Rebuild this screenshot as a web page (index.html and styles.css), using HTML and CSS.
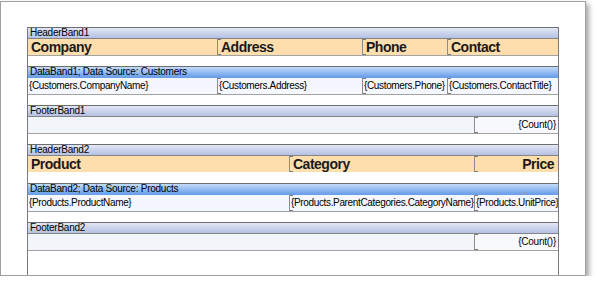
FILE: index.html
```html
<!DOCTYPE html>
<html>
<head>
<meta charset="utf-8">
<link rel="stylesheet" href="styles.css">
</head>
<body>
<div class="page">
  <div class="report">

    <div class="band">
      <div class="band-title">HeaderBand1</div>
      <div class="band-body header header1 cols-h1">
        <div class="cell">Company</div>
        <div class="cell sep">Address</div>
        <div class="cell sep">Phone</div>
        <div class="cell sep">Contact</div>
      </div>
    </div>

    <div class="band">
      <div class="band-title data-title">DataBand1; Data Source: Customers</div>
      <div class="band-body data cols-h1">
        <div class="cell">{Customers.CompanyName}</div>
        <div class="cell sep">{Customers.Address}</div>
        <div class="cell sep">{Customers.Phone}</div>
        <div class="cell sep">{Customers.ContactTitle}</div>
      </div>
    </div>

    <div class="band">
      <div class="band-title">FooterBand1</div>
      <div class="band-body footer cols-f">
        <div class="cell"></div>
        <div class="cell sep count">{Count()}</div>
      </div>
    </div>

    <div class="band">
      <div class="band-title">HeaderBand2</div>
      <div class="band-body header header2 cols-h2">
        <div class="cell">Product</div>
        <div class="cell sep">Category</div>
        <div class="cell sep right">Price</div>
      </div>
    </div>

    <div class="band">
      <div class="band-title data-title">DataBand2; Data Source: Products</div>
      <div class="band-body data cols-h2">
        <div class="cell">{Products.ProductName}</div>
        <div class="cell sep">{Products.ParentCategories.CategoryName}</div>
        <div class="cell sep">{Products.UnitPrice}</div>
      </div>
    </div>

    <div class="band">
      <div class="band-title">FooterBand2</div>
      <div class="band-body footer cols-f">
        <div class="cell"></div>
        <div class="cell sep count">{Count()}</div>
      </div>
    </div>

  </div>
</div>
</body>
</html>
```

FILE: styles.css
```css
body {
	margin: 0;
	background: #ffffff;
	font-family: "Liberation Sans", Arial, sans-serif;
	font-size: 10px;
	letter-spacing: -0.25px;
	color: #000000;
}

.page {
	margin-top: 1px;
	width: 584px;
	height: 273px;
	border: 1px solid #a0a0a0;
	background: #ffffff;
	box-shadow: 3px 3px 5px rgba(0, 0, 0, 0.35);
	display: flex;
	flex-direction: column;
}

.report {
	margin: 25px 0 0 26px;
	width: 530px;
	flex: 1;
	border-left: 1px solid #7a7a7a;
	border-right: 1px solid #7a7a7a;
}

.band {
	margin-bottom: 10px;
}

/* band captions */
.band-title {
	height: 10px;
	line-height: 10px;
	padding-left: 2px;
	border-top: 1px solid #6e6e6e;
	border-bottom: 1px solid #858585;
	background: linear-gradient(#e2e7f5, #b5c1e2);
	white-space: nowrap;
	overflow: hidden;
}

.data-title {
	background: linear-gradient(#c3dbfa, #6b9fe9);
	border-bottom-color: #6b9fe9;
}

/* band contents */
.band-body {
	display: grid;
	height: 16px;
	border-bottom: 1px solid #a3a3a3;
}

.cols-h1 { grid-template-columns: 189px 145px 85px 111px; }
.cols-h2 { grid-template-columns: 261px 185px 84px; }
.cols-f  { grid-template-columns: 446px 84px; }

.cell {
	position: relative;
	white-space: nowrap;
	overflow: hidden;
	padding-left: 1px;
}

.sep {
	border-left: 1px solid #8c8c8c;
}

.sep::before,
.sep::after {
	content: "";
	position: absolute;
	left: 0;
	width: 3px;
	height: 1px;
	background: #7a7a7a;
}
.sep::before { top: 0; }
.sep::after { bottom: 0; }

.header {
	background: #ffdead;
	font-size: 14px;
	font-weight: bold;
	letter-spacing: -0.5px;
	line-height: 16px;
	color: #1a1a1a;
}
.header .cell {
	padding-left: 3px;
}
.header2 {
	border-bottom-color: #ffffff;
}
.header .right {
	text-align: right;
	padding-right: 4px;
}

.data {
	background: #f4f7fd;
	line-height: 15px;
	letter-spacing: -0.35px;
}

.footer {
	background: #f2f5fa;
	line-height: 15px;
}
.footer .count {
	background: #f8f9fc;
	text-align: right;
	padding-right: 2px;
}
```
